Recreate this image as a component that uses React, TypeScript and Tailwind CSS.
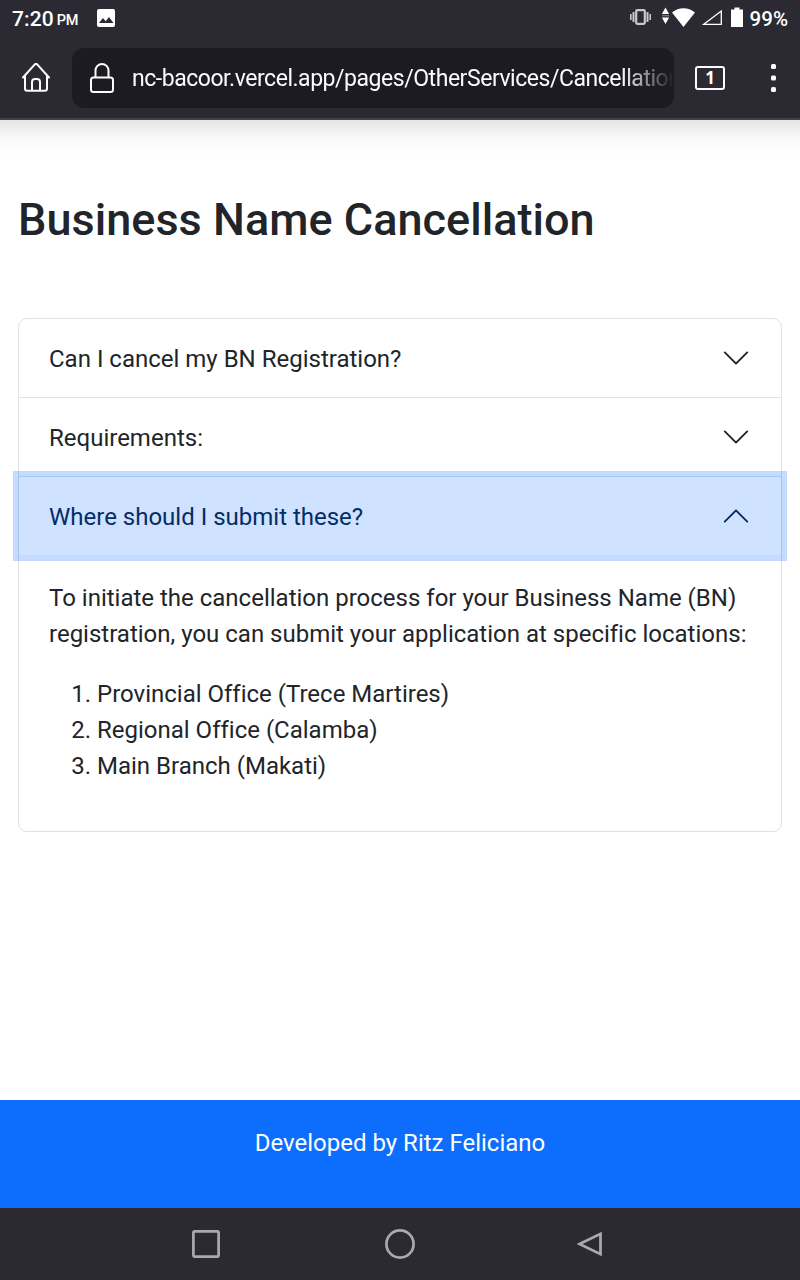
import React from "react";

function StatusIcons() {
  return (
    <svg width="116" height="36" viewBox="629 0 116 36" className="shrink-0">
      <g fill="none" stroke="#c8c8ca">
        <rect x="636.2" y="10.2" width="8.6" height="13.6" rx="1" strokeWidth="2.2" />
        <path d="M633.5 12v10M647.5 12v10" strokeWidth="2" />
        <path d="M630.8 14v6M650.2 14v6" strokeWidth="1.6" />
      </g>
      <g fill="#fff">
        <path d="M665.5 7.5l3.6 6.5h-7.2zM665.5 24l3.6-6.5h-7.2z" />
        <path d="M662 15.1h7.2v1.2H662z" opacity=".4" />
        <path d="M683.5 27L672 12.5C678.5 6.7 688.5 6.7 695 12.5z" />
        <path d="M734.5 7.5h5v2h3.5v17.5h-12v-17.5h3.5z" />
      </g>
      <path d="M703.8 24.3L721.3 11v13.3z" fill="none" stroke="#fff" strokeWidth="1.3" />
    </svg>
  );
}

function Chevron({ open = false }: { open?: boolean }) {
  return (
    <svg
      width="30"
      height="30"
      viewBox="0 0 16 16"
      fill={open ? "#052c65" : "#212529"}
      className={open ? "rotate-180" : ""}
    >
      <path
        fillRule="evenodd"
        d="M1.646 4.646a.5.5 0 0 1 .708 0L8 10.293l5.646-5.647a.5.5 0 0 1 .708.708l-6 6a.5.5 0 0 1-.708 0l-6-6a.5.5 0 0 1 0-.708z"
      />
    </svg>
  );
}

const rowClass = "flex h-[78px] w-full items-center justify-between px-[30px] text-left";

export default function App() {
  return (
    <div className="flex h-[1280px] w-[800px] flex-col overflow-hidden bg-white font-['Roboto',sans-serif] text-2xl leading-9 text-[#212529] [font-variant-ligatures:none]">
      <header className="h-[120px] shrink-0 border-b-2 border-[#42414d] bg-[#2b2a33] text-white">
        <div className="flex h-9 items-center pl-3 pr-3">
          <span className="pt-0.5 text-[21px] font-medium leading-9 tracking-[0.1px]">7:20</span>
          <span className="ml-[3px] mt-1.5 text-[14.5px] font-medium leading-8 tracking-[-0.2px]">PM</span>
          <svg width="18" height="18" viewBox="0 0 18 18" className="ml-[19px]">
            <rect width="18" height="18" rx="2" fill="#fff" />
            <path d="M2 14l4-5 2.7 3.3L12 8l4.500 6z" fill="#2b2a33" />
          </svg>
          <div className="ml-auto flex items-center">
            <StatusIcons />
            <span className="ml-[5px] pt-0.5 text-[20.5px] font-medium leading-9">99%</span>
          </div>
        </div>
        <div className="mt-3 flex h-[60px] items-center">
          <svg width="28" height="30" viewBox="22 63 28 30" fill="none" stroke="#fbfbfe" strokeWidth="2" strokeLinecap="round" strokeLinejoin="round" className="ml-[22px]">
            <path d="M23 77.5L34.6 64.6Q36 63.2 37.4 64.6L49 77.5M25 76v12.5q0 2.2 2.2 2.2h17.600q2.200 0 2.200-2.200V76" />
            <path d="M32 90v-8q0-3 3-3h2q3 0 3 3v8" />
          </svg>
          <div className="ml-[22px] flex h-[60px] w-[602px] items-center overflow-hidden rounded-xl bg-[#1c1b22]">
            <svg width="24" height="30" viewBox="90 63 24 30" fill="none" stroke="#fbfbfe" strokeWidth="2" className="ml-[18px] shrink-0">
              <rect x="91" y="77.5" width="22" height="14.5" rx="2.5" />
              <path d="M95.5 77v-6.500a6.500 6.500 0 0 1 13 0V77" />
            </svg>
            <div className="ml-[18px] w-[542px] overflow-hidden whitespace-nowrap pt-0.5 text-[23px] tracking-[-0.46px] text-[#fbfbfe] [mask-image:linear-gradient(to_right,black_calc(100%-52px),transparent)]">
              nc-bacoor.vercel.app/pages/OtherServices/Cancellation
            </div>
          </div>
          <div className="ml-[21px] flex h-6 w-[30px] items-center justify-center rounded-[3px] border-2 border-[#fbfbfe] pb-0.5 font-['Open_Sans',sans-serif] text-[17px] font-bold leading-none">
            1
          </div>
          <svg width="6" height="28" viewBox="0 0 6 28" fill="#fbfbfe" className="ml-[46px]">
            <rect x="0" y="0" width="5" height="5" rx="1.5" />
            <rect x="0" y="11.5" width="5" height="5" rx="1.5" />
            <rect x="0" y="23" width="5" height="5" rx="1.5" />
          </svg>
        </div>
      </header>

      <main className="flex h-[980px] shrink-0 flex-col px-[18px]">
        <div className="-mx-[18px] h-9 shrink-0 bg-linear-to-b from-[#e4e4e4] via-[#fafafa] to-white" />
        <h1 className="mt-[37px] text-[45px] font-medium leading-[54px] tracking-[0.03px]">Business Name Cancellation</h1>
        <div className="mt-[71px] rounded-[9px] border border-[#dee2e6]">
          <button className={rowClass}>
            <span className="pt-0.5">Can I cancel my BN Registration?</span>
            <Chevron />
          </button>
          <div className="border-t border-[#dee2e6]">
            <button className={rowClass}>
              <span className="pt-0.5">Requirements:</span>
              <Chevron />
            </button>
          </div>
          <div className="border-t border-[#dee2e6]">
            <button
              className={`${rowClass} relative bg-[#cfe2ff] text-[#052c65] shadow-[0_0_0_6px_rgba(13,110,253,0.25)]`}
            >
              <span className="pt-0.5">Where should I submit these?</span>
              <Chevron open />
            </button>
            <div className="px-[30px] pb-[23px] pt-[25px]">
              <p>
                To initiate the cancellation process for your Business Name (BN)
                <br />
                registration, you can submit your application at specific locations:
              </p>
              <ol className="my-6 list-decimal pl-12">
                <li>Provincial Office (Trece Martires)</li>
                <li>Regional Office (Calamba)</li>
                <li>Main Branch (Makati)</li>
              </ol>
            </div>
          </div>
        </div>
      </main>

      <footer className="h-[108px] shrink-0 bg-[#0d6efd] pt-[25px] text-center text-white">
        Developed by Ritz Feliciano
      </footer>

      <nav className="flex h-[72px] shrink-0 items-center bg-[#2b2a33]">
        <svg width="28" height="28" fill="none" stroke="#aaaaad" strokeWidth="2.7" className="ml-48">
          <rect x="1.4" y="1.4" width="25.2" height="25.2" rx="1.5" />
        </svg>
        <svg width="30" height="30" fill="none" stroke="#aaaaad" strokeWidth="2.7" className="ml-[165px]">
          <circle cx="15" cy="15" r="13.6" />
        </svg>
        <svg width="26" height="26" fill="none" stroke="#aaaaad" strokeWidth="2.7" className="ml-[162px]">
          <path d="M2.5 13L23.5 2.8v20.4z" />
        </svg>
      </nav>
    </div>
  );
}
